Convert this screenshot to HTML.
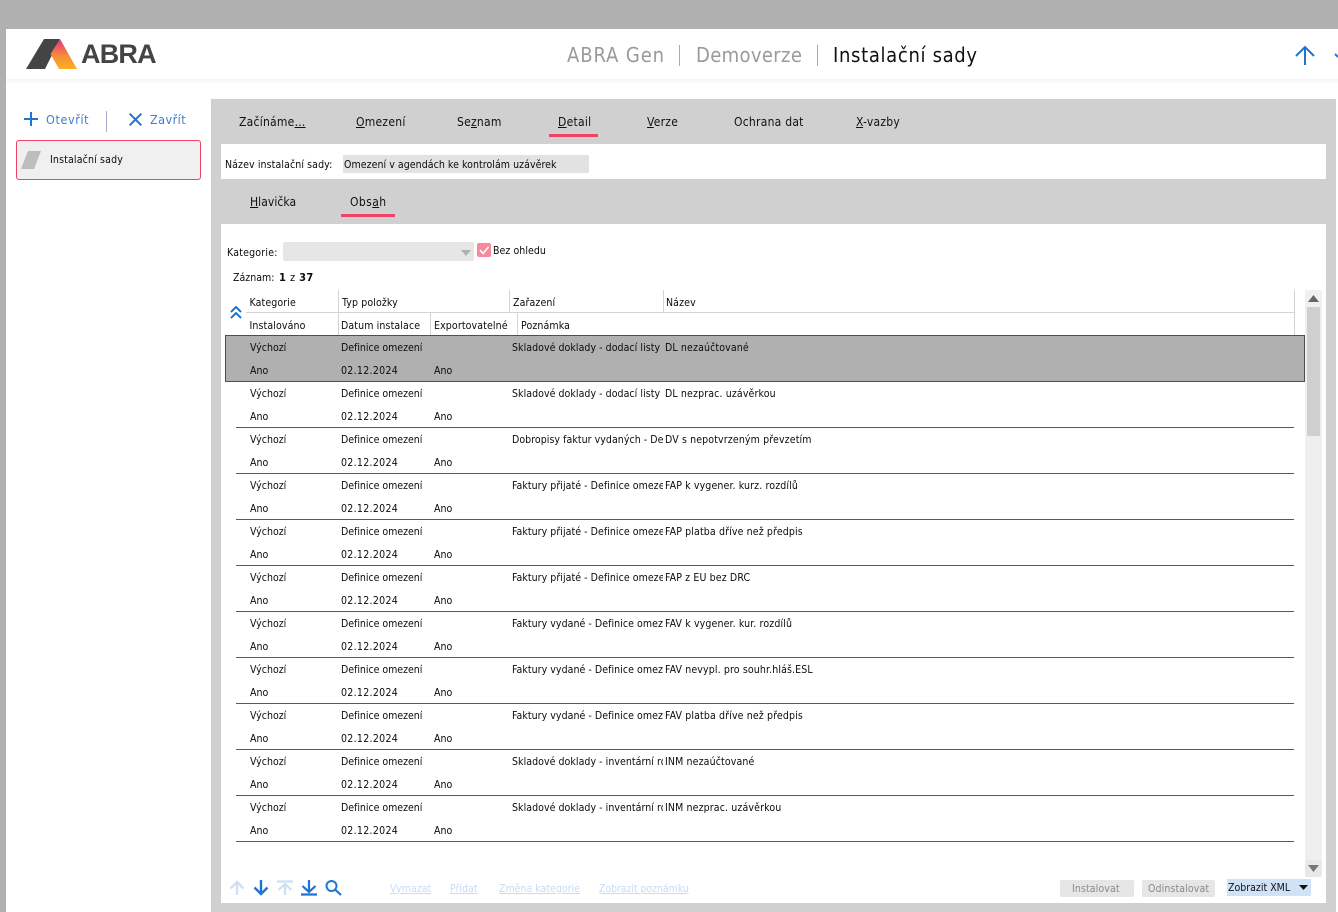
<!DOCTYPE html>
<html lang="cs"><head><meta charset="utf-8"><title>Instalační sady</title>
<style>
html,body{margin:0;padding:0;background:#fff;}
#p{position:relative;width:1338px;height:912px;overflow:hidden;background:#fff;font-family:"DejaVu Sans Condensed","DejaVu Sans",sans-serif;font-stretch:condensed;font-size:10.5px;color:#0c0c0c;}
#p div,#p span.a,#p svg{position:absolute;}
.t{position:absolute;white-space:nowrap;line-height:14px;}
.tab{font-size:12px;color:#111;letter-spacing:.25px;}
u{text-decoration:underline;}
.r{position:absolute;left:0;width:1338px;height:46px;}
.r i{position:absolute;font-style:normal;white-space:nowrap;line-height:14px;overflow:hidden;}
.c1{left:250px;top:4px;}.c2{left:341px;top:4px;letter-spacing:-.03px;}.c3{left:512px;top:4px;width:151px;letter-spacing:.05px;}.c4{left:665px;top:4px;letter-spacing:.13px;}
.d1{left:250px;top:27px;}.d2{left:341px;top:27px;letter-spacing:.3px;}.d3{left:434px;top:27px;}
.l{background:#5a5a5a;height:1px;left:236px;width:1058px;top:45px;}
.h{position:absolute;white-space:nowrap;line-height:14px;color:#0c0c0c;letter-spacing:.12px;}
.v{background:#d4d4d4;width:1px;}
.link{position:absolute;color:#c6dcf4;text-decoration:underline;white-space:nowrap;line-height:14px;}
.w{letter-spacing:.1px;}
</style></head><body><div id="p">
<div style="left:0;top:0;width:1338px;height:29px;background:#b0b0b0"></div>
<div style="left:0;top:29px;width:6px;height:883px;background:#b0b0b0"></div>
<div style="left:6px;top:79px;width:1332px;height:5px;background:linear-gradient(#f4f4f4,#fff)"></div>

<svg style="left:26px;top:39px" width="52" height="31" viewBox="26 39 52 31"><defs><linearGradient id="g" x1="0" y1="0" x2="0" y2="1"><stop offset="0" stop-color="#e5307f"/><stop offset=".55" stop-color="#f58a3c"/><stop offset="1" stop-color="#fbb21f"/></linearGradient></defs><polygon points="26,69 44,39 60,39 45,69" fill="#444"/><polygon points="60,39 77,69 59,69 50.5,54" fill="url(#g)"/></svg>
<span class="t" style="left:81px;top:38px;font-family:'Liberation Sans',sans-serif;font-stretch:normal;font-size:27px;line-height:32px;font-weight:bold;color:#444;letter-spacing:-.8px">ABRA</span>

<span class="t" style="left:567px;top:44px;font-size:20px;line-height:22px;color:#9a9a9a;letter-spacing:.9px">ABRA Gen</span>
<div style="left:679px;top:45px;width:1px;height:21px;background:#a8a8b8"></div>
<span class="t" style="left:696px;top:44px;font-size:20px;line-height:22px;color:#9a9a9a;letter-spacing:.35px">Demoverze</span>
<div style="left:817px;top:45px;width:1px;height:21px;background:#a8a8b8"></div>
<span class="t" style="left:833px;top:44px;font-size:20px;line-height:22px;color:#111;letter-spacing:.67px">Instalační sady</span>
<svg style="left:1294px;top:45px" width="44" height="22" viewBox="0 0 44 22"><path d="M11 20V2M2 11L11 2L20 11" fill="none" stroke="#1f74d1" stroke-width="2"/><path d="M41 9l3 3" fill="none" stroke="#1f74d1" stroke-width="2"/></svg>

<svg style="left:24px;top:112px" width="14" height="14" viewBox="0 0 14 14"><path d="M7 0V14M0 7H14" stroke="#1f74d1" stroke-width="2"/></svg>
<span class="t" style="left:46px;top:113px;font-size:12.500px;color:#3c7fd0;letter-spacing:.6px">Otevřít</span>
<div style="left:106px;top:111px;width:1px;height:21px;background:#a8a8c8"></div>
<svg style="left:129px;top:113px" width="13" height="13" viewBox="0 0 13 13"><path d="M.7 .7L12.3 12.3M12.3 .7L.7 12.3" stroke="#1f74d1" stroke-width="2"/></svg>
<span class="t" style="left:150px;top:113px;font-size:12.500px;color:#3c7fd0;letter-spacing:.45px">Zavřít</span>
<div style="left:16px;top:140px;width:183px;height:38px;background:#f0f0f0;border:1px solid #ee4266;border-radius:3px"></div>
<svg style="left:21px;top:151px" width="20" height="18" viewBox="0 0 20 18"><polygon points="7,0 20,0 13,18 0,18" fill="#bdbdbd"/></svg>
<span class="t" style="left:50px;top:153px;letter-spacing:.15px">Instalační sady</span>

<div style="left:211px;top:99px;width:1125px;height:813px;background:#d0d0d0"></div>
<span class="t tab" style="left:239px;top:115px">Začínáme<u>...</u></span>
<span class="t tab" style="left:356px;top:115px"><u>O</u>mezení</span>
<span class="t tab" style="left:457px;top:115px">Se<u>z</u>nam</span>
<span class="t tab" style="left:558px;top:115px"><u>D</u>etail</span>
<div style="left:549px;top:134px;width:49px;height:3px;background:#ee4266"></div>
<span class="t tab" style="left:647px;top:115px"><u>V</u>erze</span>
<span class="t tab" style="left:734px;top:115px">Ochrana dat</span>
<span class="t tab" style="left:856px;top:115px"><u>X</u>-vazby</span>

<div style="left:221px;top:144px;width:1105px;height:35px;background:#fff"></div>
<span class="t w" style="left:225px;top:158px">Název instalační sady:</span>
<div style="left:343px;top:155px;width:246px;height:18px;background:#e2e2e2"></div>
<span class="t" style="left:344px;top:158px;letter-spacing:.05px">Omezení v agendách ke kontrolám uzávěrek</span>

<span class="t tab" style="left:250px;top:195px;letter-spacing:.05px"><u>H</u>lavička</span>
<span class="t tab" style="left:350px;top:195px;letter-spacing:.4px">Obs<u>a</u>h</span>
<div style="left:341px;top:214px;width:54px;height:3px;background:#ee4266"></div>

<div style="left:221px;top:224px;width:1105px;height:679px;background:#fff"></div>
<span class="t" style="left:227px;top:246px;letter-spacing:.2px">Kategorie:</span>
<div style="left:283px;top:242px;width:191px;height:19px;background:#e6e6e6;border-radius:2px"></div>
<svg style="left:461px;top:250px" width="10" height="6" viewBox="0 0 10 6"><polygon points="0,0 10,0 5,6" fill="#b0b0b0"/></svg>
<div style="left:477px;top:243px;width:14px;height:14px;background:#f58a9e;border-radius:2px"></div>
<svg style="left:477px;top:243px" width="14" height="14" viewBox="0 0 14 14"><path d="M3 7l3 3.5L11.5 4" fill="none" stroke="#fff" stroke-width="1.6"/></svg>
<span class="t" style="left:493px;top:244px;letter-spacing:.05px">Bez ohledu</span>
<span class="t" style="left:233px;top:271px">Záznam:</span>
<span class="t" style="left:279px;top:271px;font-size:11px;font-weight:bold;letter-spacing:.3px">1 <span style="font-weight:normal">z</span> 37</span>

<span class="h" style="left:249.500px;top:296px">Kategorie</span>
<span class="h" style="left:342px;top:296px">Typ položky</span>
<span class="h" style="left:513px;top:296px">Zařazení</span>
<span class="h" style="left:666px;top:296px">Název</span>
<span class="h" style="left:249.500px;top:319px">Instalováno</span>
<span class="h" style="left:341px;top:319px">Datum instalace</span>
<span class="h" style="left:434px;top:319px">Exportovatelné</span>
<span class="h" style="left:521px;top:319px">Poznámka</span>
<div style="left:246px;top:312px;width:1048px;height:1px;background:#d4d4d4"></div>
<div class="v" style="left:338px;top:290px;height:45px"></div>
<div class="v" style="left:509px;top:290px;height:22px"></div>
<div class="v" style="left:663px;top:290px;height:22px"></div>
<div class="v" style="left:430px;top:313px;height:22px"></div>
<div class="v" style="left:517px;top:313px;height:22px"></div>
<div class="v" style="left:1294px;top:290px;height:45px"></div>
<svg style="left:230px;top:306px" width="12" height="13" viewBox="0 0 12 13"><path d="M1 6L6 1L11 6M1 12L6 7L11 12" fill="none" stroke="#1f74d1" stroke-width="2"/></svg>

<div style="left:225px;top:335px;width:1078px;height:45px;background:#b0b0b0;border:1px solid #4f4f4f"></div>

<div class="r" style="top:337px"><i class="c1">Výchozí</i><i class="c2">Definice omezení</i><i class="c3">Skladové doklady - dodací listy</i><i class="c4">DL nezaúčtované</i><i class="d1">Ano</i><i class="d2">02.12.2024</i><i class="d3">Ano</i></div>
<div class="r" style="top:383px"><i class="c1">Výchozí</i><i class="c2">Definice omezení</i><i class="c3">Skladové doklady - dodací listy</i><i class="c4">DL nezprac. uzávěrkou</i><i class="d1">Ano</i><i class="d2">02.12.2024</i><i class="d3">Ano</i></div>
<div class="r" style="top:429px"><i class="c1">Výchozí</i><i class="c2">Definice omezení</i><i class="c3">Dobropisy faktur vydaných - Definice</i><i class="c4">DV s nepotvrzeným převzetím</i><i class="d1">Ano</i><i class="d2">02.12.2024</i><i class="d3">Ano</i></div>
<div class="r" style="top:475px"><i class="c1">Výchozí</i><i class="c2">Definice omezení</i><i class="c3">Faktury přijaté - Definice omezení</i><i class="c4">FAP k vygener. kurz. rozdílů</i><i class="d1">Ano</i><i class="d2">02.12.2024</i><i class="d3">Ano</i></div>
<div class="r" style="top:521px"><i class="c1">Výchozí</i><i class="c2">Definice omezení</i><i class="c3">Faktury přijaté - Definice omezení</i><i class="c4">FAP platba dříve než předpis</i><i class="d1">Ano</i><i class="d2">02.12.2024</i><i class="d3">Ano</i></div>
<div class="r" style="top:567px"><i class="c1">Výchozí</i><i class="c2">Definice omezení</i><i class="c3">Faktury přijaté - Definice omezení</i><i class="c4">FAP z EU bez DRC</i><i class="d1">Ano</i><i class="d2">02.12.2024</i><i class="d3">Ano</i></div>
<div class="r" style="top:613px"><i class="c1">Výchozí</i><i class="c2">Definice omezení</i><i class="c3">Faktury vydané - Definice omezení</i><i class="c4">FAV k vygener. kur. rozdílů</i><i class="d1">Ano</i><i class="d2">02.12.2024</i><i class="d3">Ano</i></div>
<div class="r" style="top:659px"><i class="c1">Výchozí</i><i class="c2">Definice omezení</i><i class="c3">Faktury vydané - Definice omezení</i><i class="c4">FAV nevypl. pro souhr.hláš.ESL</i><i class="d1">Ano</i><i class="d2">02.12.2024</i><i class="d3">Ano</i></div>
<div class="r" style="top:705px"><i class="c1">Výchozí</i><i class="c2">Definice omezení</i><i class="c3">Faktury vydané - Definice omezení</i><i class="c4">FAV platba dříve než předpis</i><i class="d1">Ano</i><i class="d2">02.12.2024</i><i class="d3">Ano</i></div>
<div class="r" style="top:751px"><i class="c1">Výchozí</i><i class="c2">Definice omezení</i><i class="c3">Skladové doklady - inventární rozdíly</i><i class="c4">INM nezaúčtované</i><i class="d1">Ano</i><i class="d2">02.12.2024</i><i class="d3">Ano</i></div>
<div class="r" style="top:797px"><i class="c1">Výchozí</i><i class="c2">Definice omezení</i><i class="c3">Skladové doklady - inventární rozdíly</i><i class="c4">INM nezprac. uzávěrkou</i><i class="d1">Ano</i><i class="d2">02.12.2024</i><i class="d3">Ano</i></div>
<div class="l" style="top:427px"></div><div class="l" style="top:473px"></div><div class="l" style="top:519px"></div><div class="l" style="top:565px"></div><div class="l" style="top:611px"></div><div class="l" style="top:657px"></div><div class="l" style="top:703px"></div><div class="l" style="top:749px"></div><div class="l" style="top:795px"></div><div class="l" style="top:841px"></div>

<div style="left:1305px;top:306px;width:17px;height:554px;background:#efefef"></div>
<div style="left:1307px;top:307px;width:13px;height:129px;background:#cfcfcf;border-radius:1px"></div>
<div style="left:1305px;top:290px;width:17px;height:17px;background:#f0f0f0;border-radius:2px"></div>
<svg style="left:1308px;top:295px" width="11" height="7" viewBox="0 0 11 7"><polygon points="0,7 11,7 5.5,0" fill="#666"/></svg>
<div style="left:1305px;top:860px;width:17px;height:17px;background:#e8e8e8;border-radius:2px"></div>
<svg style="left:1308px;top:865px" width="11" height="7" viewBox="0 0 11 7"><polygon points="0,0 11,0 5.5,7" fill="#777"/></svg>

<svg style="left:229px;top:880px" width="16" height="16" viewBox="0 0 16 16"><path d="M8 15V2M1.500 8.500L8 2L14.500 8.500" fill="none" stroke="#cfe0f5" stroke-width="2.400"/></svg>
<svg style="left:253px;top:880px" width="16" height="16" viewBox="0 0 16 16"><path d="M8 0V14M1.500 7.500L8 14L14.500 7.500" fill="none" stroke="#1f74d1" stroke-width="2.400"/></svg>
<svg style="left:277px;top:880px" width="16" height="16" viewBox="0 0 16 16"><path d="M0 1.500H16M8 15V4M1.500 10L8 4L14.500 10" fill="none" stroke="#cfe0f5" stroke-width="2.200"/></svg>
<svg style="left:301px;top:880px" width="16" height="16" viewBox="0 0 16 16"><path d="M0 14.500H16M8 0V11.500M1.500 6L8 12L14.500 6" fill="none" stroke="#1f74d1" stroke-width="2.200"/></svg>
<svg style="left:325px;top:880px" width="17" height="16" viewBox="0 0 17 16"><circle cx="6.500" cy="6" r="5" fill="none" stroke="#1f74d1" stroke-width="2"/><path d="M10 9.500L16 15" stroke="#1f74d1" stroke-width="2.200"/></svg>
<span class="link" style="left:390px;top:882px">Vymazat</span>
<span class="link" style="left:450px;top:882px">Přidat</span>
<span class="link" style="left:499px;top:882px">Změna kategorie</span>
<span class="link" style="left:599px;top:882px;letter-spacing:-.08px">Zobrazit poznámku</span>

<div style="left:1060px;top:880px;width:74px;height:17px;background:#e6e6e6;border-radius:2px"></div>
<span class="t" style="left:1072px;top:882px;color:#8a8a8a;letter-spacing:.1px">Instalovat</span>
<div style="left:1142px;top:880px;width:73px;height:17px;background:#e6e6e6;border-radius:2px"></div>
<span class="t" style="left:1148px;top:882px;color:#8a8a8a;letter-spacing:.1px">Odinstalovat</span>
<div style="left:1227px;top:879px;width:84px;height:17px;background:#cfe2f6"></div>
<span class="t" style="left:1228px;top:881px;color:#111">Zobrazit XML</span>
<svg style="left:1299px;top:885px" width="9" height="5" viewBox="0 0 9 5"><polygon points="0,0 9,0 4.500,5" fill="#111"/></svg>
</div></body></html>
